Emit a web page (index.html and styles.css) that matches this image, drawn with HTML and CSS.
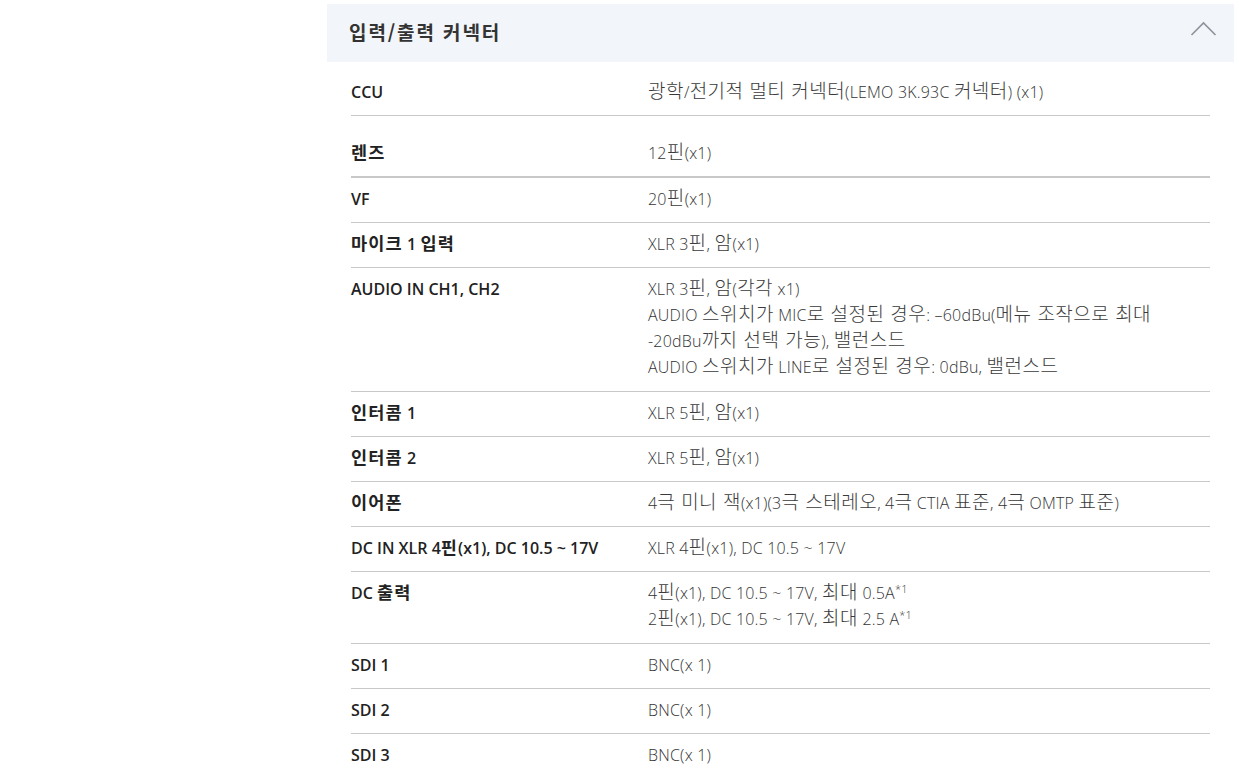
FILE: index.html
```
<!DOCTYPE html>
<html lang="ko">
<head>
    <meta charset="UTF-8">
    <meta name="viewport" content="width=device-width, initial-scale=1.0">
    <title>입력/출력 커넥터</title>
    <link rel="stylesheet" href="styles.css">
</head>
<body>

    <div class="page">
        <div class="side"></div>

        <section class="spec">
            <div class="spec-head">
                <h2>입력/출력 커넥터</h2>
                <svg class="chevron" width="28" height="16" viewBox="0 0 28 16">
                    <polyline points="1.5,14 13.5,2 25.5,14" fill="none" stroke="#8d939b" stroke-width="1.6"/>
                </svg>
            </div>

            <div class="spec-body">
                <div class="row first">
                    <div class="label">CCU</div>
                    <div class="value"><span class="ko">광학</span>/<span class="ko">전기적 멀티 커넥터</span>(LEMO 3K.93C <span class="ko">커넥터</span>) (x1)</div>
                </div>
                <div class="row lens">
                    <div class="label"><span class="ko">렌즈</span></div>
                    <div class="value">12<span class="ko">핀</span>(x1)</div>
                </div>
                <div class="row">
                    <div class="label">VF</div>
                    <div class="value">20<span class="ko">핀</span>(x1)</div>
                </div>
                <div class="row">
                    <div class="label"><span class="ko">마이크</span> 1 <span class="ko">입력</span></div>
                    <div class="value">XLR 3<span class="ko">핀</span>, <span class="ko">암</span>(x1)</div>
                </div>
                <div class="row multi">
                    <div class="label">AUDIO IN CH1, CH2</div>
                    <div class="value">
                        XLR 3<span class="ko">핀</span>, <span class="ko">암</span>(<span class="ko">각각</span> x1)<br>
                        AUDIO <span class="ko">스위치가</span> MIC<span class="ko">로 설정된 경우</span>: –60dBu(<span class="ko">메뉴 조작으로 최대</span><br>
                        -20dBu<span class="ko">까지 선택 가능</span>), <span class="ko">밸런스드</span><br>
                        AUDIO <span class="ko">스위치가</span> LINE<span class="ko">로 설정된 경우</span>: 0dBu, <span class="ko">밸런스드</span>
                    </div>
                </div>
                <div class="row">
                    <div class="label"><span class="ko">인터콤</span> 1</div>
                    <div class="value">XLR 5<span class="ko">핀</span>, <span class="ko">암</span>(x1)</div>
                </div>
                <div class="row">
                    <div class="label"><span class="ko">인터콤</span> 2</div>
                    <div class="value">XLR 5<span class="ko">핀</span>, <span class="ko">암</span>(x1)</div>
                </div>
                <div class="row">
                    <div class="label"><span class="ko">이어폰</span></div>
                    <div class="value">4<span class="ko">극 미니 잭</span>(x1)(3<span class="ko">극 스테레오</span>, 4<span class="ko">극</span> CTIA <span class="ko">표준</span>, 4<span class="ko">극</span> OMTP <span class="ko">표준</span>)</div>
                </div>
                <div class="row">
                    <div class="label">DC IN XLR 4<span class="ko">핀</span>(x1), DC 10.5 ~ 17V</div>
                    <div class="value">XLR 4<span class="ko">핀</span>(x1), DC 10.5 ~ 17V</div>
                </div>
                <div class="row multi">
                    <div class="label">DC <span class="ko">출력</span></div>
                    <div class="value">
                        4<span class="ko">핀</span>(x1), DC 10.5 ~ 17V, <span class="ko">최대</span> 0.5A<sup>*1</sup><br>
                        2<span class="ko">핀</span>(x1), DC 10.5 ~ 17V, <span class="ko">최대</span> 2.5 A<sup>*1</sup>
                    </div>
                </div>
                <div class="row">
                    <div class="label">SDI 1</div>
                    <div class="value">BNC(x 1)</div>
                </div>
                <div class="row">
                    <div class="label">SDI 2</div>
                    <div class="value">BNC(x 1)</div>
                </div>
                <div class="row">
                    <div class="label">SDI 3</div>
                    <div class="value">BNC(x 1)</div>
                </div>
            </div>
        </section>
    </div>

</body>
</html>
```

FILE: styles.css
```
body {
    margin: 0;
    font-family: "Open Sans", "Noto Sans CJK KR", sans-serif;
    color: #222;
    background: #fff;
}

.page {
    display: grid;
    grid-template-columns: 327px 907px;
    padding-top: 4px;
}

.spec-head {
    background-color: #f2f5f9;
    height: 58px;
    padding: 0 16px 0 22px;
    display: flex;
    align-items: center;
    justify-content: space-between;
}

.spec-head h2 {
    margin: 0;
    font-family: "Noto Sans CJK KR", sans-serif;
    font-size: 19px;
    font-weight: 700;
    letter-spacing: 1.9px;
    color: #333;
    padding-bottom: 4px;
}

.chevron {
    margin-bottom: 8px;
}

.spec-body {
    padding: 0 24px;
}

.row {
    display: grid;
    grid-template-columns: 297px 1fr;
    padding: 8px 0 10px;
    line-height: 26px;
    border-bottom: 1px solid #c8c8c8;
}

.row.multi {
    padding-bottom: 11px;
}

.row.first {
    padding: 17px 0 10px;
}

.row.lens {
    padding: 24px 0 10px;
    border-bottom-width: 2px;
}

.ko {
    font-family: "Noto Sans CJK KR", sans-serif;
    line-height: 1;
}

.label {
    font-size: 16px;
    font-weight: 600;
    color: #222;
}

.label .ko {
    font-size: 17.5px;
    font-weight: 700;
    letter-spacing: 1.2px;
}

.value {
    font-size: 16px;
    font-weight: 300;
    color: #333;
    letter-spacing: 0.2px;
}

.value .ko {
    font-size: 19px;
    font-weight: 300;
    color: #3a3a3a;
    letter-spacing: 0.5px;
}

.value sup {
    font-size: 11px;
    line-height: 0;
}
```
